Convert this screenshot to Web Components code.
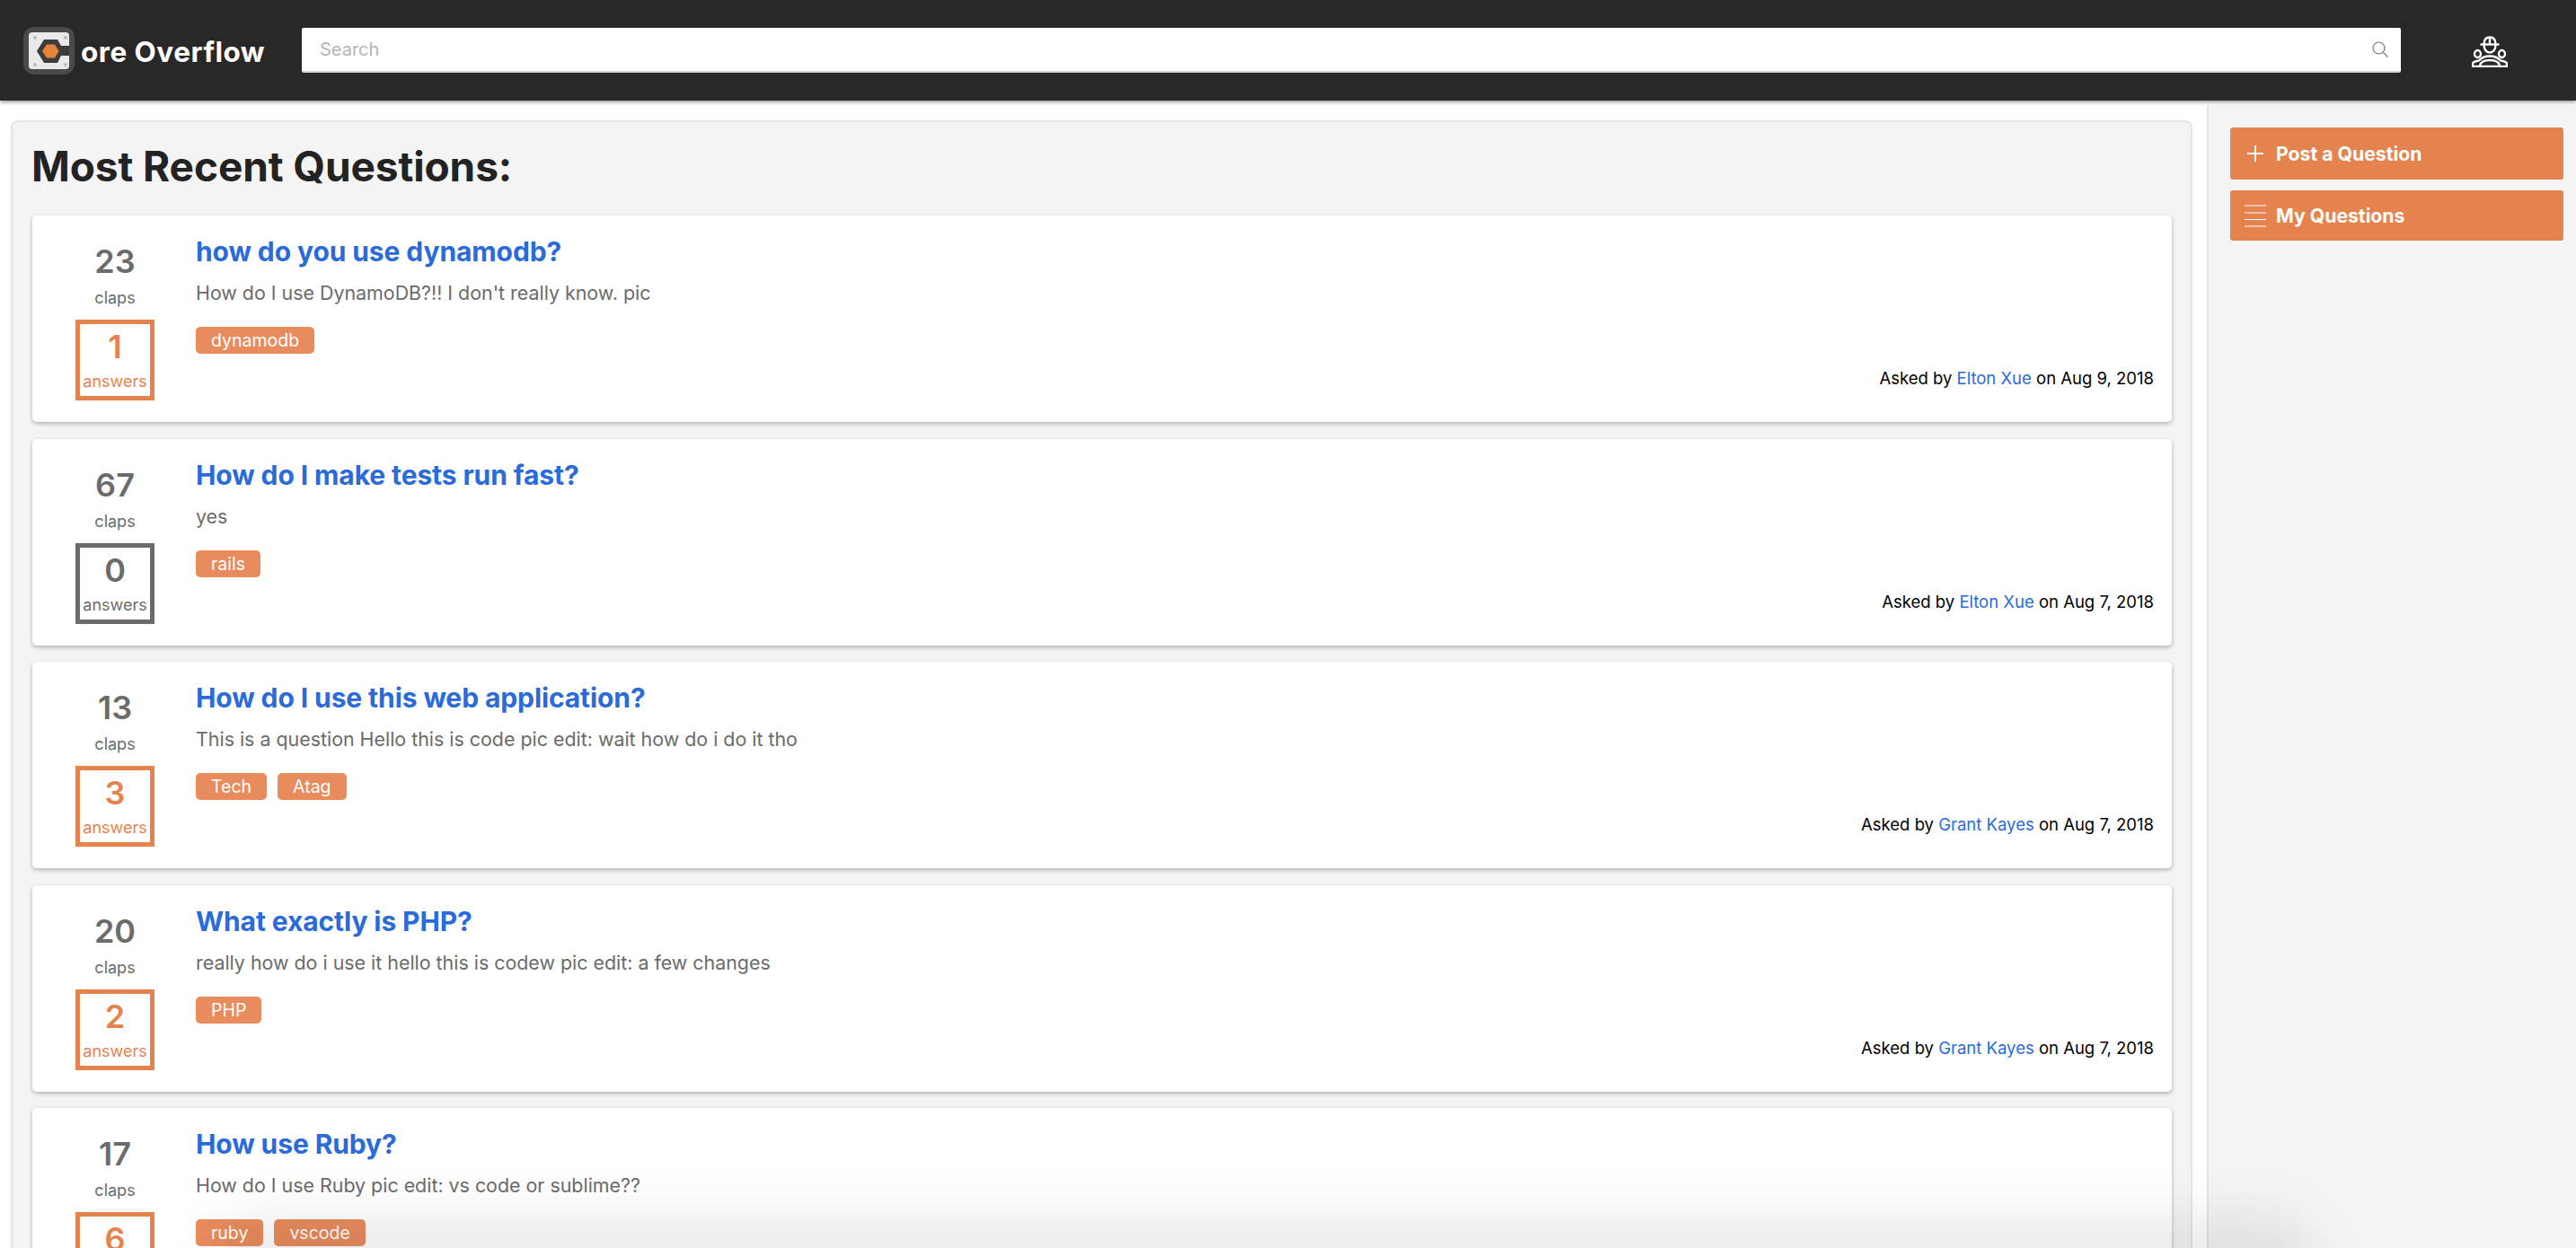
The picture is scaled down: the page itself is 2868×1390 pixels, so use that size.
<!DOCTYPE html>
<html>
<head>
<meta charset="utf-8">
<title>Core Overflow</title>
<style>
  html, body { margin: 0; height: 100%; overflow: hidden; background: #fff; }
  body { font-family: Inter, "Liberation Sans", sans-serif; }
</style>
</head>
<body>
<core-app>
  <core-header slot="header"></core-header>
  <core-feed heading="Most Recent Questions:" slot="main">
    <question-card claps="23" answers="1" title="how do you use dynamodb?" body="How do I use DynamoDB?!! I don't really know. pic" tags="dynamodb" author="Elton Xue" date="Aug 9, 2018"></question-card>
    <question-card claps="67" answers="0" title="How do I make tests run fast?" body="yes" tags="rails" author="Elton Xue" date="Aug 7, 2018"></question-card>
    <question-card claps="13" answers="3" title="How do I use this web application?" body="This is a question Hello this is code pic edit: wait how do i do it tho" tags="Tech,Atag" author="Grant Kayes" date="Aug 7, 2018"></question-card>
    <question-card claps="20" answers="2" title="What exactly is PHP?" body="really how do i use it hello this is codew pic edit: a few changes" tags="PHP" author="Grant Kayes" date="Aug 7, 2018"></question-card>
    <question-card claps="17" answers="6" title="How use Ruby?" body="How do I use Ruby pic edit: vs code or sublime??" tags="ruby,vscode"></question-card>
  </core-feed>
  <core-sidebar slot="side">
    <side-button label="Post a Question" icon="plus"></side-button>
    <side-button label="My Questions" icon="lines"></side-button>
  </core-sidebar>
</core-app>

<script>
// 1. CoreApp - page frame
class CoreApp extends HTMLElement {
  constructor() {
    super();
    this.attachShadow({ mode: 'open' });
  }

  connectedCallback() {
    this.shadowRoot.innerHTML = `
      <style>
        :host {
          display: flex;
          flex-direction: column;
          height: 1390px;
          overflow: hidden;
          position: relative;
        }
        .body {
          flex: 1;
          min-height: 0;
          display: grid;
          grid-template-columns: 1fr 411px;
          padding-top: 5px;
        }
        /* soft dark smudge along the bottom of the screenshot */
        .fade {
          position: absolute;
          left: 240px;
          width: 2340px;
          top: 1352px;
          height: 120px;
          border-radius: 60px;
          pointer-events: none;
          background: rgba(0,0,0,0.075);
          filter: blur(28px);
        }
      </style>
      <slot name="header"></slot>
      <div class="body">
        <slot name="main"></slot>
        <slot name="side"></slot>
      </div>
      <div class="fade"></div>
    `;
  }
}
customElements.define('core-app', CoreApp);

// 2. CoreHeader
class CoreHeader extends HTMLElement {
  constructor() {
    super();
    this.attachShadow({ mode: 'open' });
  }

  connectedCallback() {
    this.shadowRoot.innerHTML = `
      <style>
        :host {
          display: flex;
          align-items: center;
          height: 112px;
          flex: none;
          background: #282828;
          box-shadow: 0 2px 4px rgba(0,0,0,0.4);
          position: relative;
          z-index: 2;
          padding-left: 26px;
          box-sizing: border-box;
        }
        .brand {
          display: flex;
          align-items: center;
          width: 310px;
          flex: none;
          color: #fff;
          font-size: 31.5px;
          font-weight: 700;
          letter-spacing: 0.5px;
          white-space: nowrap;
        }
        .brand span { margin-left: 7px; margin-top: 3px; }
        .search {
          width: 2337px;
          height: 50px;
          flex: none;
          box-sizing: border-box;
          background: #fff;
          border-radius: 2px;
          border-bottom: 2px solid #d4d4d4;
          display: flex;
          align-items: center;
          padding: 0 14px 0 20px;
          margin-top: -1px;
        }
        input {
          flex: 1;
          border: 0;
          outline: 0;
          padding: 0;
          background: none;
          font: 20px Inter, "Liberation Sans", sans-serif;
        }
        input::placeholder { color: #b5b5b5; opacity: 1; }
        .user { margin-left: 79px; display: block; margin-top: 2px; }
      </style>
      <div class="brand">
        <svg width="57" height="53" viewBox="0 0 57 53">
          <rect width="57" height="53" rx="12" fill="#4a4a4a"/>
          <rect x="6" y="6" width="45" height="41" rx="4" fill="#e9e9e9"/>
          <circle cx="13" cy="12" r="2" fill="#bbb"/><circle cx="47" cy="12" r="2" fill="#bbb"/>
          <circle cx="13" cy="42" r="2" fill="#bbb"/><circle cx="47" cy="42" r="2" fill="#bbb"/>
          <path d="M15 27 L23 14 H38 L42 21 H51 V32 H42 L38 40 H23 Z" fill="#3c3c3c"/>
          <path d="M21 27 L26 19.500 H35 L39.500 27 L35 34.500 H26 Z" fill="#e5833a"/>
        </svg>
        <span>ore Overflow</span>
      </div>
      <div class="search">
        <input type="text" placeholder="Search">
        <svg width="18" height="18" viewBox="0 0 18 18" fill="none" stroke="#777" stroke-width="1.200">
          <circle cx="7.500" cy="7.500" r="6.500"/>
          <path d="M12.500 12.500 L17.500 17.500"/>
        </svg>
      </div>
      <svg class="user" width="40" height="35" viewBox="0 0 40 35" fill="none" stroke="#fff" stroke-width="2.400">
        <path d="M9.500 9.500 H30.500" />
        <path d="M13.500 9.500 C13.500 4 16 1.500 20 1.500 C24 1.500 26.500 4 26.500 9.500 C26.500 15 24 18.500 20 18.500 C16 18.500 13.500 15 13.500 9.500 Z"/>
        <path d="M20 1.500 V9.500" />
        <ellipse cx="6.500" cy="20" rx="3.500" ry="4"/>
        <ellipse cx="33.500" cy="20" rx="3.500" ry="4"/>
        <path d="M1 34 V31 C1 29 3 28.500 8 27.500 C11 24 15 22.500 20 22.500 C25 22.500 29 24 32 27.500 C37 28.500 39 29 39 31 V34 Z"/>
        <path d="M9 33 C10 28.500 14 27 20 27 C26 27 30 28.500 31 33" />
      </svg>
    `;
  }
}
customElements.define('core-header', CoreHeader);

// 3. CoreFeed - the question list panel
class CoreFeed extends HTMLElement {
  constructor() {
    super();
    this.attachShadow({ mode: 'open' });
  }

  connectedCallback() {
    const heading = this.getAttribute('heading') || '';
    this.shadowRoot.innerHTML = `
      <style>
        :host {
          display: block;
          min-height: 0;
          overflow: hidden;
          padding: 17px 16px 0 12px;
        }
        .panel {
          background: #f4f4f4;
          border: 2px solid #e6e6e6;
          border-bottom: 0;
          border-radius: 8px 8px 0 0;
          padding: 18px 21px 0 22px;
          height: 1300px;
          box-sizing: border-box;
        }
        h1 {
          margin: 0 0 24px;
          font-size: 46px;
          line-height: 62px;
          font-weight: 700;
          color: #232323;
          letter-spacing: -0.1px;
          margin-left: -1px;
        }
        .list {
          display: flex;
          flex-direction: column;
          gap: 18.5px;
        }
      </style>
      <div class="panel">
        <h1>${heading}</h1>
        <div class="list"><slot></slot></div>
      </div>
    `;
  }
}
customElements.define('core-feed', CoreFeed);

// 4. QuestionCard
class QuestionCard extends HTMLElement {
  constructor() {
    super();
    this.attachShadow({ mode: 'open' });
  }

  connectedCallback() {
    const claps = this.getAttribute('claps') || '0';
    const answers = this.getAttribute('answers') || '0';
    const title = this.getAttribute('title') || '';
    const body = this.getAttribute('body') || '';
    const author = this.getAttribute('author') || '';
    const date = this.getAttribute('date') || '';
    const tags = (this.getAttribute('tags') || '').split(',');
    const answered = answers !== '0';

    this.shadowRoot.innerHTML = `
      <style>
        :host {
          display: grid;
          grid-template-columns: 182px 1fr;
          height: 230px;
          flex: none;
          box-sizing: border-box;
          background: #fff;
          border-radius: 5px;
          box-shadow: 0 2px 5px rgba(0,0,0,0.28);
          padding-right: 20px;
        }
        .stats {
          display: flex;
          flex-direction: column;
          align-items: center;
          width: 184px;
          color: #6b6b6b;
          padding-top: 30px;
          box-sizing: border-box;
        }
        .num { font-size: 36px; line-height: 42px; font-weight: 600; }
        .claps { font-size: 18px; line-height: 22px; margin-top: 9px; margin-bottom: 13px; }
        .box {
          width: 88px;
          height: 90px;
          box-sizing: border-box;
          border: 5px solid #6b6b6b;
          display: flex;
          flex-direction: column;
          align-items: center;
          padding-top: 4px;
        }
        .box.on { border-color: #e5834f; color: #e5834f; }
        .box .label { font-size: 18px; line-height: 22px; margin-top: 7px; }
        .main {
          display: flex;
          flex-direction: column;
          padding-top: 20px;
          min-width: 0;
        }
        a.title {
          font-size: 30px;
          line-height: 40px;
          font-weight: 700;
          letter-spacing: -0.1px;
          color: #2a6bd9;
          text-decoration: none;
        }
        .body {
          margin-top: 12px;
          font-size: 21.4px;
          line-height: 28px;
          color: #6b6b6b;
        }
        .tags { display: flex; gap: 12px; margin-top: 24px; }
        .tag {
          height: 30px;
          line-height: 30px;
          padding: 0 17px;
          border-radius: 5px;
          background: #e98c5d;
          color: #fff;
          font-size: 19.5px;
        }
        .meta {
          margin-top: auto;
          padding-bottom: 37px;
          text-align: right;
          font-size: 18.5px;
          line-height: 24px;
          color: #000;
        }
        .meta a { color: #2a6bd9; text-decoration: none; }
      </style>
      <div class="stats">
        <div class="num">${claps}</div>
        <div class="claps">claps</div>
        <div class="box ${answered ? 'on' : ''}">
          <div class="num">${answers}</div>
          <div class="label">answers</div>
        </div>
      </div>
      <div class="main">
        <a class="title" href="#">${title}</a>
        <div class="body">${body}</div>
        <div class="tags">${tags.map(t => `<span class="tag">${t}</span>`).join('')}</div>
        ${author ? `<div class="meta">Asked by <a href="#">${author}</a> on ${date}</div>` : ''}
      </div>
    `;
  }
}
customElements.define('question-card', QuestionCard);

// 5. CoreSidebar
class CoreSidebar extends HTMLElement {
  constructor() {
    super();
    this.attachShadow({ mode: 'open' });
  }

  connectedCallback() {
    this.shadowRoot.innerHTML = `
      <style>
        :host {
          display: flex;
          flex-direction: column;
          gap: 12px;
          background: #f4f4f4;
          border-left: 2px solid #e2e2e2;
          padding: 25px 14px 0 24px;
          box-sizing: border-box;
        }
      </style>
      <slot></slot>
    `;
  }
}
customElements.define('core-sidebar', CoreSidebar);

// 6. SideButton
class SideButton extends HTMLElement {
  constructor() {
    super();
    this.attachShadow({ mode: 'open' });
  }

  connectedCallback() {
    const label = this.getAttribute('label') || '';
    const icon = this.getAttribute('icon') || 'plus';
    const plus = icon === 'plus';
    const glyph = plus
      ? '<path d="M12 3 V21 M3 12 H21"/>'
      : '<path d="M0 1 H24 M0 9 H24 M0 16.500 H24 M0 24 H24"/>';

    this.shadowRoot.innerHTML = `
      <style>
        :host {
          display: flex;
          align-items: center;
          height: ${plus ? 58 : 56}px;
          border-radius: 3px;
          background: #e5834f;
          color: #fff;
          font-size: 21.2px;
          font-weight: 700;
          padding-left: 16px;
        }
        svg { margin-right: 11px; flex: none; }
        span { margin-top: -1px; }
      </style>
      <svg width="24" height="25" viewBox="0 0 24 25" fill="none" stroke="#fff" stroke-width="${plus ? 2 : 1.2}">${glyph}</svg>
      <span>${label}</span>
    `;
  }
}
customElements.define('side-button', SideButton);
</script>
</body>
</html>
